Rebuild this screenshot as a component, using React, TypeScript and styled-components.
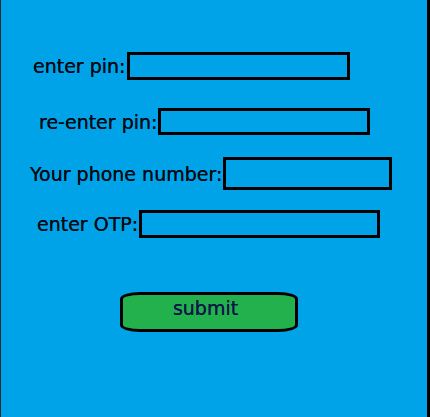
import React from "react";
import styled, { createGlobalStyle } from "styled-components";

const Global = createGlobalStyle`
  html, body { margin: 0; padding: 0; background: #00a2e8; }
  * { box-sizing: border-box; }
`;

const Page = styled.div`
  width: 430px;
  height: 417px;
  background: #00a2e8;
  border-left: 1px solid #1c2a33;
  border-right: 3px solid #000;
  display: flex;
  flex-direction: column;
  padding-top: 52px;
  font-family: "DejaVu Sans", Verdana, sans-serif;
  font-size: 19px;
`;

const Row = styled.div<{ $top: number; $left: number }>`
  display: flex;
  align-items: center;
  gap: 1px;
  margin-top: ${(p) => p.$top}px;
  padding-left: ${(p) => p.$left - 1}px;
`;

const Label = styled.label`
  color: #020a12;
  white-space: nowrap;
  text-shadow: 0 0 0.4px #020a12;
`;

const Field = styled.input<{ $w: number; $h: number }>`
  width: ${(p) => p.$w}px;
  height: ${(p) => p.$h}px;
  border: 3px solid #000;
  border-radius: 0;
  background: transparent;
  outline: none;
  padding: 0;
  margin: 0;
`;

const Submit = styled.button`
  margin-top: 54px;
  margin-left: 119px;
  width: 178px;
  height: 40px;
  border: 3px solid #000;
  border-radius: 20px / 7px;
  background: #22b14c;
  color: #0c1646;
  text-shadow: 0 0 0.4px #0c1646;
  font-family: inherit;
  font-size: 19px;
  display: flex;
  justify-content: center;
  align-items: flex-start;
  padding: 2px 7px 0 0;
  cursor: pointer;
`;

const rows = [
  { label: "enter pin:", top: 0, left: 33, w: 223, h: 28 },
  { label: "re-enter pin:", top: 28, left: 39, w: 212, h: 27 },
  { label: "Your phone number:", top: 22, left: 30, w: 169, h: 33 },
  { label: "enter OTP:", top: 20, left: 37, w: 241, h: 28 },
];

export default function App() {
  return (
    <>
      <Global />
      <Page>
        {rows.map((r) => (
          <Row key={r.label} $top={r.top} $left={r.left}>
            <Label>{r.label}</Label>
            <Field $w={r.w} $h={r.h} />
          </Row>
        ))}
        <Submit>submit</Submit>
      </Page>
    </>
  );
}
